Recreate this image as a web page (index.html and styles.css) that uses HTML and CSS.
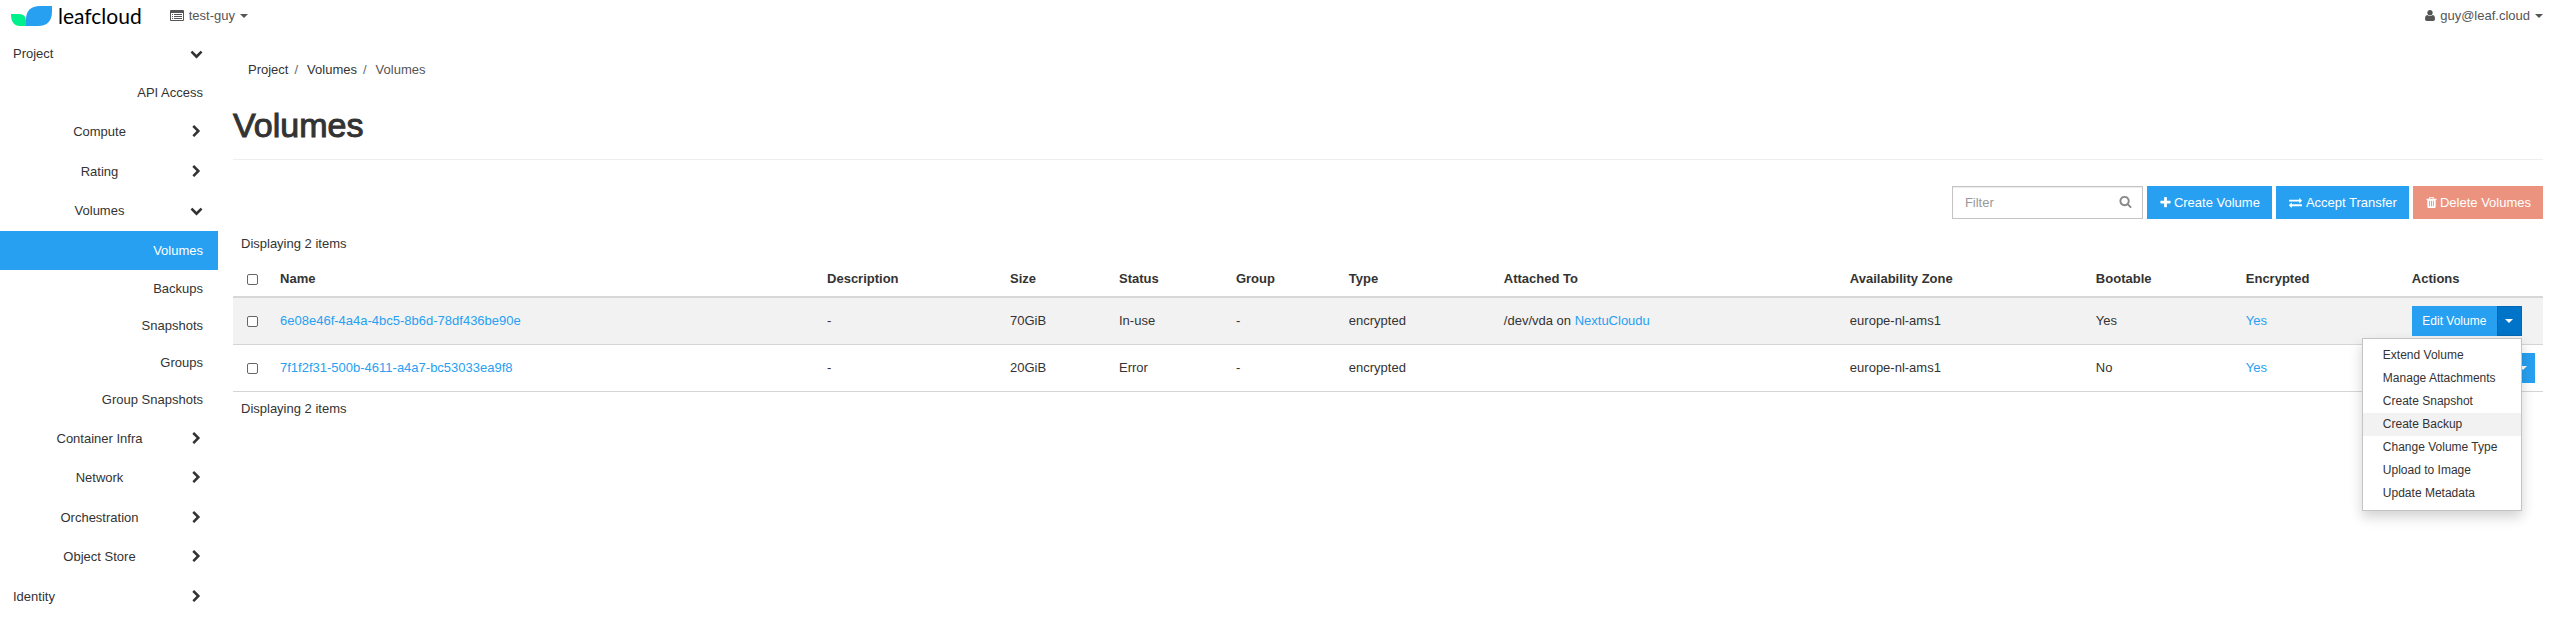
FILE: index.html
```html
<!DOCTYPE html>
<html lang="en">
<head>
<meta charset="utf-8">
<meta name="viewport" content="width=device-width, initial-scale=1">
<title>Volumes</title>
<link rel="stylesheet" href="styles.css">
</head>
<body>
<svg class="sprite" aria-hidden="true">
  <symbol id="right" viewBox="0 0 1792 1792"><path d="M1363 877l-742 742q-19 19-45 19t-45-19l-166-166q-19-19-19-45t19-45l531-531-531-531q-19-19-19-45t19-45l166-166q19-19 45-19t45 19l742 742q19 19 19 45t-19 45z"/></symbol>
  <symbol id="down" viewBox="0 0 1792 1792"><path d="M1683 808l-742 741q-19 19-45 19t-45-19l-742-741q-19-19-19-45.500t19-45.500l166-165q19-19 45-19t45 19l531 531 531-531q19-19 45-19t45 19l166 165q19 19 19 45.500t-19 45.500z"/></symbol>
  <symbol id="plus" viewBox="0 0 1792 1792"><path d="M1600 736v192q0 40-28 68t-68 28h-416v416q0 40-28 68t-68 28h-192q-40 0-68-28t-28-68v-416h-416q-40 0-68-28t-28-68v-192q0-40 28-68t68-28h416v-416q0-40 28-68t68-28h192q40 0 68 28t28 68v416h416q40 0 68 28t28 68z"/></symbol>
  <symbol id="exchange" viewBox="0 0 1792 1792"><path d="M1792 1184v192q0 13-9.500 22.500t-22.500 9.500h-1376v192q0 13-9.500 22.500t-22.500 9.500q-12 0-24-10l-319-320q-9-9-9-22 0-14 9-23l320-320q9-9 23-9 13 0 22.500 9.500t9.500 22.500v192h1376q13 0 22.500 9.500t9.500 22.500zm0-544q0 14-9 23l-320 320q-9 9-23 9-13 0-22.500-9.500t-9.500-22.500v-192h-1376q-13 0-22.500-9.500t-9.500-22.500v-192q0-13 9.500-22.500t22.500-9.500h1376v-192q0-14 9-23t23-9q12 0 24 10l319 319q9 9 9 23z"/></symbol>
  <symbol id="trash" viewBox="0 0 1792 1792"><path d="M704 1376v-704q0-14-9-23t-23-9h-64q-14 0-23 9t-9 23v704q0 14 9 23t23 9h64q14 0 23-9t9-23zm256 0v-704q0-14-9-23t-23-9h-64q-14 0-23 9t-9 23v704q0 14 9 23t23 9h64q14 0 23-9t9-23zm256 0v-704q0-14-9-23t-23-9h-64q-14 0-23 9t-9 23v704q0 14 9 23t23 9h64q14 0 23-9t9-23zm-544-992h448l-48-117q-7-9-17-11h-317q-10 2-17 11zm928 32v64q0 14-9 23t-23 9h-96v948q0 83-47 143.500t-113 60.500h-832q-66 0-113-58.500t-47-141.500v-952h-96q-14 0-23-9t-9-23v-64q0-14 9-23t23-9h309l70-167q15-37 54-63t79-26h320q40 0 79 26t54 63l70 167h309q14 0 23 9t9 23z"/></symbol>
  <symbol id="search" viewBox="0 0 1792 1792"><path d="M1216 832q0-185-131.500-316.500t-316.500-131.500-316.500 131.500-131.500 316.500 131.500 316.500 316.500 131.500 316.500-131.500 131.500-316.500zm512 832q0 52-38 90t-90 38q-54 0-90-38l-343-342q-179 124-399 124-143 0-273.500-55.500t-225-150-150-225-55.500-273.500 55.500-273.500 150-225 225-150 273.500-55.500 273.500 55.500 225 150 150 225 55.500 273.500q0 220-124 399l343 343q37 37 37 90z"/></symbol>
  <symbol id="user" viewBox="192 128 1408 1536"><path d="M1600 1405q0 120-73 189.500t-194 69.500h-874q-121 0-194-69.500t-73-189.500q0-53 3.500-103.500t14-109 26.500-108.500 43-97.500 62-81 85.500-53.500 111.500-20q9 0 42 21.500t74.500 48 108 48 133.500 21.500 133.500-21.500 108-48 74.500-48 42-21.500q61 0 111.500 20t85.500 53.500 62 81 43 97.500 26.500 108.500 14 109 3.500 103.500zm-320-893q0 159-112.500 271.500t-271.500 112.500-271.500-112.500-112.500-271.500 112.500-271.500 271.500-112.500 271.500 112.500 112.500 271.500z"/></symbol>
</svg>

<header class="topbar">
  <a class="brand" href="#">
    <svg class="brand-mark" viewBox="0 0 41 20" aria-hidden="true">
      <path fill="#00f08c" d="M0 8h8q7 0 7 7v5H9Q0 20 0 8z"/>
      <path fill="#28a0f1" d="M15 20v-6Q15 0 29 0h12v5q0 15-14 15z"/>
    </svg>
    <span class="brand-name">leafcloud</span>
  </a>
  <button class="top-menu" type="button">
    <svg class="icon-list" viewBox="0 0 14 11" aria-hidden="true"><path fill-rule="evenodd" d="M1 0h12q1 0 1 1v9q0 1-1 1H1q-1 0-1-1V1q0-1 1-1zm0 3v7h12V3zM2 4h1v1H2zm2 0h8v1H4zM2 6h1v1H2zm2 0h8v1H4zM2 8h1v1H2zm2 0h8v1H4z"/></svg>
    test-guy <span class="caret"></span>
  </button>
  <button class="top-menu top-user" type="button">
    <svg class="icon-user" aria-hidden="true"><use href="#user"/></svg>
    guy@leaf.cloud <span class="caret"></span>
  </button>
</header>

<div class="page">
  <nav class="sidebar" aria-label="Main">
    <a class="nav-head nav-root" href="#"><span>Project</span><svg class="chevron"><use href="#down"/></svg></a>
    <ul class="nav-groups">
      <li><ul class="nav-leaves"><li><a class="nav-leaf nav-leaf-tall" href="#">API Access</a></li></ul></li>
      <li><a class="nav-head" href="#"><span>Compute</span><svg class="chevron"><use href="#right"/></svg></a></li>
      <li class="spaced"><a class="nav-head" href="#"><span>Rating</span><svg class="chevron"><use href="#right"/></svg></a></li>
      <li>
        <a class="nav-head" href="#"><span>Volumes</span><svg class="chevron"><use href="#down"/></svg></a>
        <ul class="nav-leaves open">
          <li><a class="nav-leaf nav-leaf-tall active" href="#" aria-current="page">Volumes</a></li>
          <li><a class="nav-leaf" href="#">Backups</a></li>
          <li><a class="nav-leaf" href="#">Snapshots</a></li>
          <li><a class="nav-leaf" href="#">Groups</a></li>
          <li><a class="nav-leaf" href="#">Group Snapshots</a></li>
        </ul>
      </li>
      <li class="spaced"><a class="nav-head" href="#"><span>Container Infra</span><svg class="chevron"><use href="#right"/></svg></a></li>
      <li><a class="nav-head" href="#"><span>Network</span><svg class="chevron"><use href="#right"/></svg></a></li>
      <li class="spaced"><a class="nav-head" href="#"><span>Orchestration</span><svg class="chevron"><use href="#right"/></svg></a></li>
      <li><a class="nav-head" href="#"><span>Object Store</span><svg class="chevron"><use href="#right"/></svg></a></li>
    </ul>
    <a class="nav-head nav-root spaced" href="#"><span>Identity</span><svg class="chevron"><use href="#right"/></svg></a>
  </nav>

  <main class="main">
    <ol class="breadcrumb">
      <li><a href="#">Project</a></li>
      <li><a href="#">Volumes</a></li>
      <li class="current">Volumes</li>
    </ol>
    <h1 class="title">Volumes</h1>

    <div class="toolbar">
      <div class="filter">
        <input class="filter-input" type="text" placeholder="Filter" aria-label="Filter">
        <svg class="filter-icon" aria-hidden="true"><use href="#search"/></svg>
      </div>
      <button class="btn" type="button"><svg class="icon"><use href="#plus"/></svg>Create Volume</button>
      <button class="btn" type="button"><svg class="icon icon-wide"><use href="#exchange"/></svg>Accept Transfer</button>
      <button class="btn btn-danger" type="button"><svg class="icon"><use href="#trash"/></svg>Delete Volumes</button>
    </div>

    <p class="count">Displaying 2 items</p>
    <table class="table">
      <colgroup>
        <col class="c-check"><col class="c-name"><col class="c-desc"><col class="c-size"><col class="c-status"><col class="c-group"><col class="c-type"><col class="c-attached"><col class="c-zone"><col class="c-boot"><col class="c-enc"><col class="c-actions">
      </colgroup>
      <thead>
        <tr>
          <th class="check"><input class="box" type="checkbox" aria-label="Select all"></th>
          <th>Name</th><th>Description</th><th>Size</th><th>Status</th><th>Group</th><th>Type</th><th>Attached To</th><th>Availability Zone</th><th>Bootable</th><th>Encrypted</th><th>Actions</th>
        </tr>
      </thead>
      <tbody>
        <tr class="hover">
          <td class="check"><input class="box" type="checkbox" aria-label="Select 6e08e46f-4a4a-4bc5-8b6d-78df436be90e"></td>
          <td><a href="#">6e08e46f-4a4a-4bc5-8b6d-78df436be90e</a></td>
          <td>-</td><td>70GiB</td><td>In-use</td><td>-</td><td>encrypted</td>
          <td>/dev/vda on <a href="#">NextuCloudu</a></td>
          <td>europe-nl-ams1</td><td>Yes</td><td><a href="#">Yes</a></td>
          <td>
            <div class="split">
              <button class="split-main" type="button">Edit Volume</button>
              <button class="split-toggle pressed" type="button" aria-label="More actions" aria-expanded="true"><span class="caret"></span></button>
              <ul class="menu">
                <li><button class="menu-item" type="button">Extend Volume</button></li>
                <li><button class="menu-item" type="button">Manage Attachments</button></li>
                <li><button class="menu-item" type="button">Create Snapshot</button></li>
                <li><button class="menu-item focused" type="button">Create Backup</button></li>
                <li><button class="menu-item" type="button">Change Volume Type</button></li>
                <li><button class="menu-item" type="button">Upload to Image</button></li>
                <li><button class="menu-item" type="button">Update Metadata</button></li>
              </ul>
            </div>
          </td>
        </tr>
        <tr>
          <td class="check"><input class="box" type="checkbox" aria-label="Select 7f1f2f31-500b-4611-a4a7-bc53033ea9f8"></td>
          <td><a href="#">7f1f2f31-500b-4611-a4a7-bc53033ea9f8</a></td>
          <td>-</td><td>20GiB</td><td>Error</td><td>-</td><td>encrypted</td>
          <td></td>
          <td>europe-nl-ams1</td><td>No</td><td><a href="#">Yes</a></td>
          <td>
            <div class="split split-fill">
              <button class="split-main" type="button" aria-label="Edit Volume"></button>
              <button class="split-toggle" type="button" aria-label="More actions"><span class="caret"></span></button>
            </div>
          </td>
        </tr>
      </tbody>
    </table>
    <p class="count count-bottom">Displaying 2 items</p>
  </main>
</div>
</body>
</html>
```

FILE: styles.css
```css
* { box-sizing: border-box; }

body {
  margin: 0;
  background: #fff;
  color: #333;
  font: 13px/18px "Liberation Sans", Arial, sans-serif;
}

a { color: #28a0f1; text-decoration: none; }
button, input { font: inherit; }
button { margin: 0; padding: 0; border: 0; background: none; color: inherit; }
ul, ol { margin: 0; padding: 0; list-style: none; }
svg { fill: currentColor; flex: none; }
.sprite { display: none; }

.caret {
  border: 4px solid transparent;
  border-top-color: currentColor;
  border-bottom: 0;
}

/* Top bar */
.topbar {
  display: flex;
  align-items: center;
  height: 31px;
  padding: 0 15px 0 11px;
}
.brand { display: flex; align-items: center; gap: 6px; margin-right: 28px; color: #000; }
.brand-mark { width: 41px; height: 20px; }
.brand-name { font: 21px/24px Lato, sans-serif; }
.top-menu { display: flex; align-items: center; gap: 5px; color: #555; }
.top-user { margin-left: auto; }
.icon-list { width: 14px; height: 11px; }
.icon-user { width: 10px; height: 11px; }

.page { display: flex; align-items: flex-start; }

/* Sidebar */
.sidebar { flex: none; width: 218px; padding-top: 3px; }
.nav-head {
  display: flex;
  align-items: center;
  height: 39px;
  padding: 0 15px 0 9px;
  color: #333;
  text-align: center;
}
.nav-head span { flex: 1; }
.nav-root { padding-left: 13px; text-align: left; }
.chevron { width: 13px; height: 13px; }
.spaced { margin-top: 1px; }
.open { padding-top: 1px; }
.nav-leaf {
  display: block;
  padding-right: 15px;
  color: #333;
  line-height: 37px;
  text-align: right;
}
.nav-leaf-tall { line-height: 39px; }
.active { background: #28a0f1; color: #fff; }

/* Content */
.main { flex: 1; min-width: 0; padding: 30px 15px 0; }
.breadcrumb { display: flex; padding: 0 15px; }
.breadcrumb a { color: #333; }
.breadcrumb li + li::before { content: "/"; padding: 0 9px 0 6px; color: #666; }
.current { color: #555; }
.title {
  margin: 28px 0 0;
  padding-bottom: 16px;
  border-bottom: 1px solid #eee;
  font-size: 34px;
  font-weight: 400;
  line-height: 36px;
  -webkit-text-stroke: 1px currentColor;
}

.toolbar { display: flex; justify-content: flex-end; gap: 4px; margin-top: 26px; }
.filter { position: relative; width: 191px; }
.filter-input {
  display: block;
  width: 100%;
  height: 33px;
  padding: 0 32px 0 12px;
  border: 1px solid #c4c4c4;
  border-radius: 0;
  box-shadow: inset 0 1px 1px rgba(0, 0, 0, .08);
  color: #555;
}
.filter-input::placeholder { color: #999; opacity: 1; }
.filter-icon { position: absolute; top: 9px; right: 11px; width: 13px; height: 13px; color: #888; }
.btn {
  display: flex;
  align-items: center;
  gap: 2px;
  height: 33px;
  padding: 0 12px;
  background: #28a0f1;
  color: #fff;
}
.btn-danger { background: #ec937f; }
.icon { width: 13px; height: 13px; }
.icon-wide { width: 15px; margin-right: 1px; }

.count { margin: 16px 0 9px; padding: 0 8px; }
.count-bottom { margin: 8px 0 0; }

/* Volumes table */
.table { width: 100%; border-spacing: 0; table-layout: fixed; }
.table th, .table td { padding: 8px; text-align: left; }
.table th { border-bottom: 2px solid #d8d8d8; }
.table td { border-bottom: 1px solid #d5d5d5; }
.table .check { padding-left: 14px; }
.hover { background: #f2f2f2; }
.box {
  display: block;
  appearance: none;
  width: 11px;
  height: 11px;
  margin: 0;
  border: 1px solid #666;
  border-radius: 2px;
  background: #fff;
}
.c-check { width: 39px; }
.c-name { width: 23.68%; }
.c-desc { width: 7.92%; }
.c-size { width: 4.72%; }
.c-status { width: 5.06%; }
.c-group { width: 4.89%; }
.c-type { width: 6.71%; }
.c-attached { width: 14.98%; }
.c-zone { width: 10.65%; }
.c-boot { width: 6.49%; }
.c-enc { width: 7.19%; }
.c-actions { width: 139px; }

/* Split button and its menu */
.split { position: relative; display: flex; width: 110px; font-size: 12px; }
.split-fill { width: 100%; }
.split-main { flex: 1; height: 30px; background: #28a0f1; color: #fff; }
.split-toggle {
  display: flex;
  align-items: center;
  justify-content: center;
  width: 25px;
  height: 30px;
  background: #28a0f1;
  color: #fff;
}
.pressed { background: #0074c8; box-shadow: inset 0 0 0 1px #0068b4; }
.menu {
  position: absolute;
  z-index: 1;
  top: 32px;
  right: 0;
  width: 160px;
  padding: 5px 0;
  border: 1px solid #c4c4c4;
  background: #fff;
  box-shadow: 0 6px 12px rgba(0, 0, 0, .18);
}
.menu-item {
  display: block;
  width: 100%;
  padding-left: 20px;
  line-height: 23px;
  text-align: left;
}
.focused { background: #f2f2f2; }
```
